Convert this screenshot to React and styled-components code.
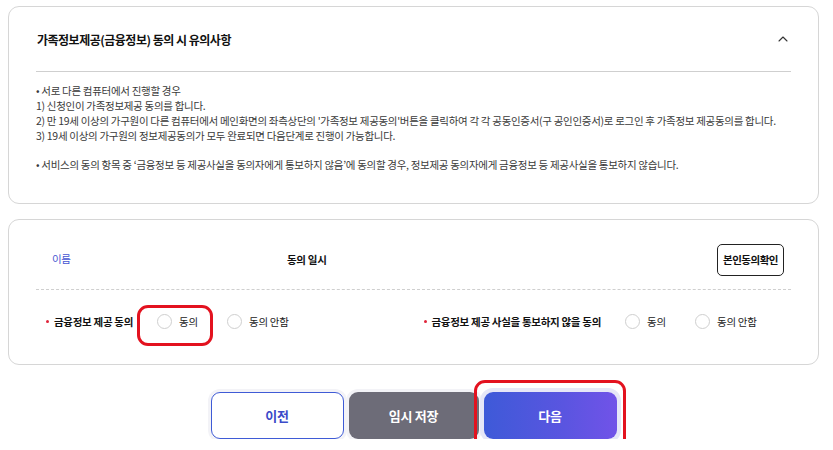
import React from "react";
import styled, { createGlobalStyle } from "styled-components";
import { ChevronUp } from "lucide-react";

const GlobalStyle = createGlobalStyle`
  html, body {
    margin: 0;
    padding: 0;
    background: #ffffff;
  }
  body {
    font-family: "Noto Sans CJK KR", "Noto Sans", sans-serif;
    color: #222;
  }
`;

const Page = styled.div`
  position: relative;
  width: 811px;
  padding: 6px 0 0 8px;
`;

const Card = styled.section`
  border: 1px solid #d6d6d6;
  border-radius: 11px;
  background: #fff;
  padding: 0 27px;
  box-sizing: border-box;
  height: ${(p) => p.$height}px;
  & + & {
    margin-top: 15px;
  }
`;

const AccordionHead = styled.div`
  display: flex;
  align-items: center;
  justify-content: space-between;
  height: 64px;
  border-bottom: 1px solid #cfcfcf;
  padding: 0 0 0 1px;
`;

const Title = styled.h3`
  margin: 0;
  font-size: 12px;
  font-weight: 700;
  letter-spacing: -0.5px;
  color: #111;
`;

const Toggle = styled.span`
  display: flex;
  color: #333;
`;

const Notice = styled.div`
  padding-top: 11px;
  font-size: 10.5px;
  line-height: 15px;
  letter-spacing: -0.3px;
  color: #3a3a3a;
`;

const NoticeLine = styled.p`
  margin: 0;
  margin-top: ${(p) => (p.$gap ? "14px" : "0")};
`;

const ConsentHead = styled.div`
  display: flex;
  align-items: center;
  height: 70px;
  border-bottom: 1px dashed #cfcfcf;
  box-sizing: border-box;
  padding-top: 22px;
  padding-bottom: 12px;
`;

const HeadName = styled.div`
  width: 251px;
  padding-left: 16px;
  box-sizing: border-box;
  font-size: 10.5px;
  color: #4656d2;
  letter-spacing: -0.3px;
  margin-top: -2px;
`;

const HeadDate = styled.div`
  flex: 1;
  font-size: 10.5px;
  font-weight: 700;
  letter-spacing: -0.3px;
  color: #111;
`;

const CheckButton = styled.button`
  font-family: inherit;
  font-size: 10.5px;
  font-weight: 700;
  letter-spacing: -0.5px;
  color: #111;
  background: #fff;
  border: 1px solid #222;
  border-radius: 5px;
  width: 67px;
  height: 32px;
  padding: 0;
  margin-right: 7px;
  cursor: pointer;
`;

const ConsentRow = styled.div`
  display: flex;
  height: 62px;
  align-items: center;
`;

const ConsentGroup = styled.div`
  flex: 1;
  display: flex;
  align-items: center;
  padding-left: 10px;
`;

const Label = styled.span`
  position: relative;
  font-size: 10.5px;
  font-weight: 700;
  letter-spacing: -0.3px;
  color: #111;
  padding-left: 8px;
  margin-right: 24px;
  &::before {
    content: "";
    position: absolute;
    left: 0;
    top: 50%;
    width: 3px;
    height: 3px;
    margin-top: -1px;
    border-radius: 50%;
    background: #e0243a;
  }
`;

const Option = styled.label`
  display: flex;
  align-items: center;
  gap: 7px;
  width: 70px;
  font-size: 10.5px;
  letter-spacing: -0.3px;
  color: #222;
`;

const Radio = styled.span`
  width: 15px;
  height: 15px;
  border: 1px solid #cfcfcf;
  border-radius: 50%;
  box-sizing: border-box;
  background: #fff;
`;

const Actions = styled.div`
  display: flex;
  justify-content: center;
  gap: 5px;
  margin-top: 27px;
`;

const ActionButton = styled.button`
  font-family: inherit;
  font-size: 13px;
  font-weight: 700;
  letter-spacing: -0.3px;
  width: ${(p) => p.$w}px;
  height: 47px;
  border-radius: 9px;
  cursor: pointer;
  border: ${(p) => (p.$kind === "line" ? "1.5px solid #3f5bd6" : "none")};
  color: ${(p) => (p.$kind === "line" ? "#3c4bc9" : "#fff")};
  background: ${(p) =>
    p.$kind === "line"
      ? "#fff"
      : p.$kind === "gray"
      ? "#6d6c78"
      : "linear-gradient(90deg, #3e5ad8 0%, #5a55e0 60%, #7153e8 100%)"};
  box-shadow: ${(p) =>
    p.$kind === "primary" ? "0 0 0 4px #e6e7f7" : "0 0 0 3px #f3f3f7"};
`;

const Mark = styled.div`
  position: absolute;
  left: ${(p) => p.$x}px;
  top: ${(p) => p.$y}px;
  width: ${(p) => p.$w}px;
  height: ${(p) => p.$h}px;
  border: 3px solid #e3121f;
  border-radius: 11px;
  box-sizing: border-box;
  pointer-events: none;
`;

const notices = [
  "• 서로 다른 컴퓨터에서 진행할 경우",
  "1) 신청인이 가족정보제공 동의를 합니다.",
  "2) 만 19세 이상의 가구원이 다른 컴퓨터에서 메인화면의 좌측상단의 '가족정보 제공동의'버튼을 클릭하여 각 각 공동인증서(구 공인인증서)로 로그인 후 가족정보 제공동의를 합니다.",
  "3) 19세 이상의 가구원의 정보제공동의가 모두 완료되면 다음단계로 진행이 가능합니다.",
];

const consents = [
  "금융정보 제공 동의",
  "금융정보 제공 사실을 통보하지 않을 동의",
];

const App = () => {
  return (
    <>
      <GlobalStyle />
      <Page>
        <Card $height={198}>
          <AccordionHead>
            <Title>가족정보제공(금융정보) 동의 시 유의사항</Title>
            <Toggle>
              <ChevronUp size={16} strokeWidth={1.6} />
            </Toggle>
          </AccordionHead>
          <Notice>
            {notices.map((line) => (
              <NoticeLine key={line}>{line}</NoticeLine>
            ))}
            <NoticeLine $gap>
              • 서비스의 동의 항목 중 ‘금융정보 등 제공사실을 동의자에게 통보하지 않음’에 동의할 경우, 정보제공 동의자에게 금융정보 등 제공사실을 통보하지 않습니다.
            </NoticeLine>
          </Notice>
        </Card>

        <Card $height={146}>
          <ConsentHead>
            <HeadName>이름</HeadName>
            <HeadDate>동의 일시</HeadDate>
            <CheckButton>본인동의확인</CheckButton>
          </ConsentHead>
          <ConsentRow>
            {consents.map((label) => (
              <ConsentGroup key={label}>
                <Label>{label}</Label>
                <Option>
                  <Radio />
                  동의
                </Option>
                <Option>
                  <Radio />
                  동의 안함
                </Option>
              </ConsentGroup>
            ))}
          </ConsentRow>
        </Card>

        <Actions>
          <ActionButton $kind="line" $w={133}>
            이전
          </ActionButton>
          <ActionButton $kind="gray" $w={130}>
            임시 저장
          </ActionButton>
          <ActionButton $kind="primary" $w={133}>
            다음
          </ActionButton>
        </Actions>

        <Mark $x={137} $y={305} $w={76} $h={41} />
        <Mark $x={474} $y={380} $w={152} $h={69} />
      </Page>
    </>
  );
};

export default App;
